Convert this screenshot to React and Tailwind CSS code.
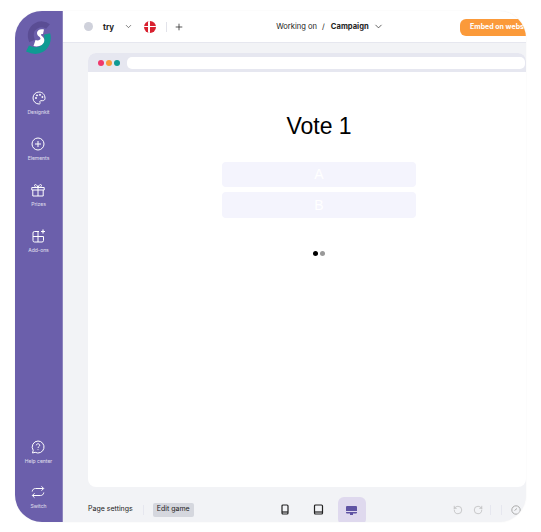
import { ChevronDown, Plus, RotateCcw, RotateCw } from 'lucide-react';

const font = { fontFamily: 'Inter, sans-serif' };

const NavItem = ({ label, children, className = '' }) => (
  <div className={`flex flex-col items-center text-white ${className}`}>
    {children}
    <span className="mt-[4px] whitespace-nowrap text-[5px] leading-[7px] text-white/80">{label}</span>
  </div>
);

const PaletteIcon = () => (
  <svg width="14" height="14" viewBox="0 0 14 14" fill="none" stroke="currentColor" strokeWidth="1">
    <path d="M7 1a6 6 0 1 0 0 12c1.2 0 1.4-.8 1-1.5-.5-.9 0-1.8 1-1.8h1.700c1.400 0 2.300-1 2.300-2.400C13 3.400 10.400 1 7 1z" />
    <circle cx="4" cy="7" r=".6" fill="currentColor" />
    <circle cx="5" cy="4.400" r=".6" fill="currentColor" />
    <circle cx="8" cy="3.800" r=".6" fill="currentColor" />
    <circle cx="10.400" cy="6" r=".6" fill="currentColor" />
  </svg>
);

const CirclePlus = () => (
  <svg width="14" height="14" viewBox="0 0 14 14" fill="none" stroke="currentColor" strokeWidth="1">
    <circle cx="7" cy="7" r="6" />
    <path d="M7 4v6M4 7h6" />
  </svg>
);

const GiftIcon = () => (
  <svg width="14" height="14" viewBox="0 0 14 14" fill="none" stroke="currentColor" strokeWidth="1">
    <path d="M.8 4.500h12.400v2.500H.8zM1.800 7v6h10.400V7M7 4.500V13" />
    <path d="M7 4.500C5 4.500 3.500 3.800 3.500 2.500 3.500 1 6 1 7 4.500zM7 4.500c2 0 3.500-.7 3.500-2C10.500 1 8 1 7 4.500z" />
  </svg>
);

const AddonIcon = () => (
  <svg width="14" height="14" viewBox="0 0 14 14" fill="none" stroke="currentColor" strokeWidth="1">
    <path d="M7 2.500H2.500a1.500 1.500 0 0 0-1.500 1.500v7.500A1.500 1.500 0 0 0 2.500 13H10a1.500 1.500 0 0 0 1.500-1.500V7.500H1M6 2.500V13" />
    <path d="M11 .5v4M9 2.500h4" strokeWidth="1.200" />
  </svg>
);

const HelpIcon = () => (
  <svg width="14" height="14" viewBox="0 0 14 14" fill="none" stroke="currentColor" strokeWidth="1">
    <path d="M7 1a6 6 0 1 1-2.800 11.300L1.500 13l.7-2.700A6 6 0 0 1 7 1z" />
    <path d="M5.300 5.300C5.400 4.300 6.100 3.800 7 3.800c1 0 1.700.6 1.700 1.500 0 1.300-1.700 1.300-1.700 2.700M7 9.300v.8" />
  </svg>
);

const SwitchIcon = () => (
  <svg width="14" height="14" viewBox="0 0 14 14" fill="none" stroke="currentColor" strokeWidth="1">
    <path d="M1.200 6.500C1.500 4.500 2.800 3.500 4.500 3.500h8M10.500 1.300l2.200 2.200-2.200 2.200" />
    <path d="M12.800 7.500c-.3 2-1.600 3-3.300 3h-8M3.500 8.300l-2.200 2.200 2.200 2.200" />
  </svg>
);

const Logo = () => (
  <svg width="25" height="34" viewBox="0 0 25 34" fill="none">
    <path d="M22 5.500C19 3 14 2.500 10 5 5 8 3.500 14 6 20" stroke="#5a4d94" strokeWidth="6" />
    <path d="M21 13c1.500 6-.5 12-5.500 15-4 2.300-9 2-14-.5" stroke="#0f9a93" strokeWidth="6.500" />
    <path d="M18 8.500c-3.500-1-7 .5-7 3.500 0 3.300 3.500 3.700 3.500 5.500 0 1.500-2.500 2.500-5 1.500L7.500 25c4.500 1.300 10.500-.5 10.800-5.500.2-3.700-3.300-4.200-3.300-5.700 0-.8 1-1 2-.7z" fill="#fff" />
  </svg>
);

const Flag = () => (
  <div className="relative h-3 w-3 overflow-hidden rounded-full bg-[#d8202f]">
    <div className="absolute left-[4px] top-0 h-full w-[1.500px] bg-white" />
    <div className="absolute left-0 top-[5px] h-[1.500px] w-full bg-white" />
  </div>
);

const App = () => {
  return (
    <div className="h-[532px] w-[541px] overflow-hidden bg-white pl-[15px] pt-[11px]" style={font}>
      <div className="flex h-[511px] w-[511px] overflow-hidden rounded-[27px] bg-[#f2f3f6] shadow-[0_0_2px_rgba(0,0,0,0.06)]">
        {/* sidebar */}
        <aside className="flex w-[48px] shrink-0 flex-col items-center border-r border-[#8d84bd] bg-[#6b5fab]">
          <div className="mt-[10px]">
            <Logo />
          </div>
          <NavItem label="Designkit" className="mt-[36px]"><PaletteIcon /></NavItem>
          <NavItem label="Elements" className="mt-[21px]"><CirclePlus /></NavItem>
          <NavItem label="Prizes" className="mt-[21px]"><GiftIcon /></NavItem>
          <NavItem label="Add-ons" className="mt-[21px]"><AddonIcon /></NavItem>
          <NavItem label="Help center" className="mt-auto"><HelpIcon /></NavItem>
          <NavItem label="Switch" className="mb-[12px] mt-[20px]"><SwitchIcon /></NavItem>
        </aside>

        <div className="flex min-w-0 flex-1 flex-col">
          {/* top bar */}
          <header className="flex h-[32px] shrink-0 items-center whitespace-nowrap border-b border-[#e6e7ef] bg-white pl-[21px] text-[8px] text-[#222]">
            <div className="h-[9px] w-[9px] shrink-0 rounded-full bg-[#cfd1db]" />
            <span className="ml-[10px] font-bold">try</span>
            <ChevronDown className="ml-[10px] shrink-0" size={9} strokeWidth={1.500} />
            <div className="ml-[11px] shrink-0"><Flag /></div>
            <div className="ml-[10px] h-[10px] w-px shrink-0 bg-[#e2e3ea]" />
            <Plus className="ml-[7px] shrink-0" size={10} strokeWidth={1.800} />
            <span className="ml-[92px] shrink-0 text-[7.600px]">Working on</span>
            <span className="ml-[5px] text-[7.600px]">/</span>
            <span className="ml-[6px] text-[7.600px] font-bold">Campaign</span>
            <ChevronDown className="ml-[4px] shrink-0" size={11} strokeWidth={1.500} />
            <div className="ml-auto mt-[1px] flex h-[17px] w-[66px] shrink-0 items-center overflow-hidden rounded-l-[6px] bg-[#fb9a3a] pl-[10px] text-[7px] font-bold text-white">
              Embed on website
            </div>
          </header>

          {/* canvas */}
          <div className="min-h-0 flex-1 pl-[25px] pt-[10px]">
            <div className="flex h-[434px] flex-col overflow-hidden rounded-[8px] bg-white">
              <div className="flex h-[19px] shrink-0 items-center gap-[2px] bg-[#e6e7f0] pl-[10px] pr-[1px]">
                <span className="h-[6px] w-[6px] rounded-full bg-[#f0386b]" />
                <span className="h-[6px] w-[6px] rounded-full bg-[#fb9a3a]" />
                <span className="h-[6px] w-[6px] rounded-full bg-[#0f9a93]" />
                <div className="ml-[5px] h-[12px] flex-1 rounded-[5px] bg-white" />
              </div>
              <div className="flex flex-1 flex-col items-center pl-[24px]" style={{ fontFamily: '"Liberation Sans", sans-serif' }}>
                <h1 className="mt-[40px] text-[23px] leading-[28px] text-black">Vote 1</h1>
                <div className="mt-[22px] flex w-[194px] flex-col gap-[5px] text-[14px] text-white">
                  <div className="flex h-[25px] items-center justify-center rounded-[4px] bg-[#f4f4fd]">A</div>
                  <div className="flex h-[26px] items-center justify-center rounded-[4px] bg-[#f4f4fd]">B</div>
                </div>
                <div className="mt-[33px] flex gap-[2px]">
                  <span className="h-[5px] w-[5px] rounded-full bg-black" />
                  <span className="h-[5px] w-[5px] rounded-full bg-[#999]" />
                </div>
              </div>
            </div>
          </div>

          {/* bottom bar */}
          <footer className="flex h-[25px] shrink-0 items-center whitespace-nowrap pl-[25px] text-[7px] text-[#222]">
            <span>Page settings</span>
            <div className="ml-[10px] h-[10px] w-px shrink-0 bg-[#e6e7ef]" />
            <span className="ml-[9px] flex h-[14px] items-center rounded-[2px] bg-[#d5d7de] px-[4px]">Edit game</span>
            <svg className="ml-[86px] shrink-0" width="10" height="11" viewBox="0 0 10 11" fill="none" stroke="#222" strokeWidth="1.200">
              <rect x="2" y="1" width="6" height="9" rx="1" />
              <path d="M2 8h6" />
            </svg>
            <svg className="ml-[23px] shrink-0" width="11" height="11" viewBox="0 0 11 11" fill="none" stroke="#222" strokeWidth="1.200">
              <rect x="1.500" y="1" width="8" height="9" rx="1" />
              <path d="M1.500 8h8" />
            </svg>
            <div className="ml-[14px] flex h-[28px] w-[28px] shrink-0 items-center justify-center self-start rounded-[6px] bg-[#dfd9ee]">
              <svg width="11" height="10" viewBox="0 0 11 10" fill="#5f53a3">
                <path d="M1 0h9a1 1 0 0 1 1 1v4H0V1a1 1 0 0 1 1-1z" />
                <path d="M0 6h11v.5a1 1 0 0 1-1 1H7V9H4V7.500H1a1 1 0 0 1-1-1z" />
              </svg>
            </div>
            <RotateCcw className="ml-[87px] shrink-0 text-[#aaa]" size={10} strokeWidth={1.400} />
            <RotateCw className="ml-[10px] shrink-0 text-[#aaa]" size={10} strokeWidth={1.400} />
            <div className="ml-[7px] h-[10px] w-px shrink-0 bg-[#e6e7ef]" />
            <div className="ml-[10px] h-[10px] w-px shrink-0 bg-[#e6e7ef]" />
            <svg className="ml-[9px] shrink-0" width="10" height="10" viewBox="0 0 10 10" fill="none" stroke="#aaa" strokeWidth="1">
              <circle cx="5" cy="5" r="4.200" />
              <path d="M3.500 5.500 6 3.500" />
            </svg>
          </footer>
        </div>
      </div>
    </div>
  );
};

export default App;
